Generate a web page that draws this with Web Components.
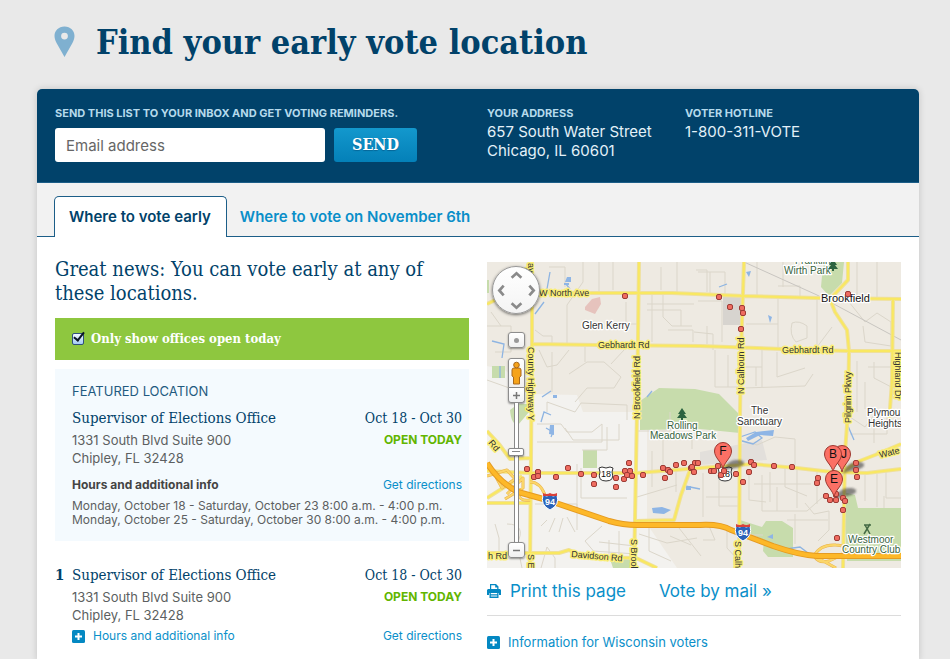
<!DOCTYPE html>
<html lang="en">
<head>
<meta charset="utf-8">
<title>Find your early vote location</title>
<style>
html{background:#e9e9e9;--navy:#01426a;--link:#0a8fc9;--slab:"DejaVu Serif Condensed","DejaVu Serif",serif}
body{margin:0;font-family:Inter,"Open Sans",sans-serif;font-size:13px;line-height:18px;color:#5c5f61;min-height:100vh;display:flex;flex-direction:column}
</style>
</head>
<body>
<page-title>Find your early vote location</page-title>
<vote-panel>
  <signup-bar slot="top"></signup-bar>
  <tab-bar slot="tabs"></tab-bar>
  <office-list slot="left"></office-list>
  <map-column slot="right"></map-column>
</vote-panel>

<script>
function define(name, html, setup) {
  const template = document.createElement('template');
  template.innerHTML = '<style>*{box-sizing:border-box}a{color:var(--link);text-decoration:none}h1,h2,h3,p{margin:0}</style>' + html;
  customElements.define(name, class extends HTMLElement {
    connectedCallback() {
      if (this.shadowRoot) return;
      const root = this.attachShadow({ mode: 'open' });
      root.append(template.content.cloneNode(true));
      if (setup) setup(root, this);
    }
  });
}

define('page-title', `
<style>
:host{display:flex;align-items:center;gap:21px;padding:20px 54px 25px}
svg{width:21px;height:32px;flex:none}
h1{font:bold 34px/44px var(--slab);color:var(--navy)}
</style>
<svg viewBox="0 0 21 32"><path fill="#7fb0d0" fill-rule="evenodd" d="M10.500 0.500C4.500 0.500 .5 4.800.5 10c0 2.500 1 4.800 2.200 7.200L10.500 31l7.800-13.800C19.500 14.800 20.500 12.500 20.500 10 20.500 4.800 16.500.5 10.500.5zm0 6.200a3.400 3.400 0 1 1 0 6.800 3.400 3.400 0 0 1 0-6.800z"/></svg>
<h1><slot></slot></h1>`);

define('vote-panel', `
<style>
:host{display:flex;flex-direction:column;flex:1;margin:0 31px 0 37px;background:#fff;border-radius:5px 5px 0 0;box-shadow:0 0 7px rgba(0,0,0,.16)}
main{display:grid;grid-template-columns:1fr 1fr;gap:18px;padding:20px 18px 8px}
</style>
<slot name="top"></slot><slot name="tabs"></slot>
<main><slot name="left"></slot><slot name="right"></slot></main>`);

define('signup-bar', `
<style>
:host{display:grid;grid-template-columns:1fr 1fr;gap:18px;background:var(--navy);color:#e3f1f9;padding:16px 18px 20px;border-bottom:1px solid #1c5e88;border-radius:5px 5px 0 0}
label,h2{display:block;font-size:11px;line-height:17px;font-weight:700;color:#b5daec}
form{margin:0}
.row{display:flex;gap:9px;margin-top:6px}
input{width:270px;min-width:0;height:34px;border:0;border-radius:3px;background:#fff;padding:0 11px;font:15px/20px Inter,sans-serif;color:#444}
input::placeholder{color:#666;opacity:1}
button{width:83px;height:34px;border:0;border-radius:3px;padding:0;background:linear-gradient(#1398cd,#0480b8);color:#fff;font:bold 16px/20px var(--slab);text-shadow:0 1px 1px rgba(0,50,90,.4)}
.facts{display:flex;gap:29px}
p{font-size:15px;line-height:19px}
.facts div{min-width:169px}
</style>
<form><label for="email">SEND THIS LIST TO YOUR INBOX AND GET VOTING REMINDERS.</label>
<div class="row"><input id="email" type="email" placeholder="Email address"><button type="button">SEND</button></div></form>
<div class="facts"><div><h2>YOUR ADDRESS</h2><p>657 South Water Street<br>Chicago, IL 60601</p></div><div><h2>VOTER HOTLINE</h2><p>1-800-311-VOTE</p></div></div>`);

define('tab-bar', `
<style>
:host{display:flex;padding:13px 17px 0;background:#f2f2f2;box-shadow:inset 0 -1px #1c5e88}
a{font-size:15px;line-height:42px;font-weight:600;height:41px;padding:0 14px 0 13px}
a.on{line-height:40px;color:var(--navy);background:#fff;border:1px solid #1c5e88;border-bottom:0;border-radius:5px 5px 0 0;padding:0 15px 0 14px}
</style>
<a class="on" href="#early">Where to vote early</a><a href="#november">Where to vote on November 6th</a>`);

define('plus-link', `
<style>
:host{display:block}
a{display:inline-flex;align-items:center;gap:8px}
svg{width:13px;height:13px;flex:none}
</style>
<a href="#more"><svg viewBox="0 0 13 13"><rect width="13" height="13" rx="1.500" fill="#0488c2"/><path d="M6.500 3v7M3 6.500h7" stroke="#fff" stroke-width="2"/></svg><span><slot></slot></span></a>`);

define('office-card', `
<style>
:host{display:grid;grid-template-columns:17px 1fr;padding-right:7px}
:host([featured]){background:#f4fafe;padding-top:13px;padding-bottom:14px}
b{font:bold 15px/25px var(--slab);color:var(--navy)}
.row{display:flex;justify-content:space-between;gap:12px}
.kind{display:none;font-size:13px;line-height:18px;color:#1f5a80;margin-bottom:6px}
:host([featured]) .kind{display:block}
h3,.date{font:15px/25px var(--slab);color:var(--navy)}
.date{font-size:14px}
.open{font-size:12px;font-weight:700;color:#62b500}
.info{margin-top:3px;font-size:12px}
:host([featured]) .info{margin-top:9px}
strong{color:#444}
.hours{font-size:12px;line-height:14px;margin-top:5px}
</style>
<b></b>
<div>
<p class="kind">FEATURED LOCATION</p>
<div class="row"><h3>Supervisor of Elections Office</h3><span class="date">Oct 18 - Oct 30</span></div>
<div class="row"><p>1331 South Blvd Suite 900<br>Chipley, FL 32428</p><span class="open">OPEN TODAY</span></div>
<div class="row info"><span class="label"></span><a href="#directions">Get directions</a></div>
</div>`, (root, host) => {
  root.querySelector('b').textContent = host.getAttribute('number') || '';
  const label = root.querySelector('.label');
  if (host.hasAttribute('featured')) {
    label.innerHTML = '<strong>Hours and additional info</strong>';
    const hours = document.createElement('p');
    hours.className = 'hours';
    hours.innerHTML = 'Monday, October 18 - Saturday, October 23 8:00 a.m. - 4:00 p.m.<br>Monday, October 25 - Saturday, October 30 8:00 a.m. - 4:00 p.m.';
    label.parentNode.after(hours);
  } else {
    label.innerHTML = '<plus-link>Hours and additional info</plus-link>';
  }
});

define('office-list', `
<style>
:host{display:block}
h2{font:20px/24px var(--slab);color:var(--navy)}
label{display:flex;align-items:center;gap:7px;margin:13px 0 9px;height:42px;padding:0 17px;background:#8ec73f;color:#fff;font:bold 13px/20px var(--slab)}
input{appearance:none;position:relative;width:12px;height:12px;margin:0;flex:none;border:1px solid #30507c;border-radius:2px;background:linear-gradient(#f2f8ff,#a4ccf4)}
input:checked::after{content:"";position:absolute;left:3px;top:-4px;width:4px;height:9px;border:solid #0b1524;border-width:0 2px 2px 0;transform:rotate(38deg)}
office-card + office-card{margin-top:22px}
</style>
<h2>Great news: You can vote early at any of these locations.</h2>
<label><input type="checkbox" checked>Only show offices open today</label>
<office-card featured></office-card>
<office-card number="1"></office-card>`);

define('map-column', `
<style>
:host{display:block;padding-top:5px}
nav{display:flex;gap:33px;margin-top:11px;padding-bottom:12px;border-bottom:1px solid #dcdcdc;font-size:17px;line-height:24px}
nav a{display:flex;align-items:center;gap:9px}
svg{width:14px;height:14px}
plus-link{margin-top:17px}
</style>
<voter-map></voter-map>
<nav><a href="#print"><svg viewBox="0 0 14 14" fill="#0488c2"><path d="M3 0h6l2.500 2.500V5H13l1 1v5h-2V9H2v2H0V6l1-1h2zM4.200 1.200V5h6V3.400H8.200V1.200z" fill-rule="evenodd"/><path fill-rule="evenodd" d="M2.500 8h9v6h-9zM3.800 9v1.200h6.400V9zm0 2.400v1.200h6.400v-1.200z"/></svg>Print this page</a><a href="#mail">Vote by mail »</a></nav>
<plus-link>Information for Wisconsin voters</plus-link>`);

define('voter-map', `
<style>
:host{display:block;position:relative;background:#eeeae2;font-family:"Liberation Sans",Arial,sans-serif}
.map{display:block;width:100%;height:auto}
.controls{position:absolute;left:5px;top:4px;width:48px;display:flex;flex-direction:column;align-items:center}
button{display:block;padding:0;border:1px solid #8d8d8d;background:linear-gradient(#fff,#f0f0f0);border-radius:3px;width:17px;height:16px;box-shadow:0 1px 2px rgba(0,0,0,.4);color:#777}
button svg{display:block;margin:auto}
.pan{display:grid;grid-template-columns:repeat(3,15px);grid-template-rows:repeat(3,15px);place-content:center;width:48px;height:48px;border-radius:50%;border:1px solid #999;background:linear-gradient(#fff,#f4f4f4);box-shadow:0 1px 3px rgba(0,0,0,.55)}
.pan button{width:15px;height:15px;border:0;background:none;box-shadow:none}
.center{margin-top:18px}
.peg{margin-top:10px;height:30px;border-radius:3px 3px 0 0}
.in{height:15px;border-top:0;border-radius:0 0 3px 3px}
input{appearance:none;writing-mode:vertical-lr;width:17px;height:139px;margin:0;background:linear-gradient(90deg,transparent 6px,#888 6px,#888 7px,#fff 7px,#fff 10px,#888 10px,#888 11px,transparent 11px)}
input::-webkit-slider-thumb{appearance:none;width:16px;height:8px;border:1px solid #888;border-radius:2px;background:linear-gradient(#888,#888) center/8px 1px no-repeat,#fff;box-shadow:0 1px 2px rgba(0,0,0,.4)}
</style>
<svg class="map" viewBox="0 0 414 306" role="img" aria-label="Map of early vote locations">
<defs>
<g id="pin"><path d="M0 0C-1-7-8.500-11-8.500-18a8.500 8.500 0 0 1 17 0C8.500-11 1-7 0 0z" fill="#fb7065" stroke="#9c3830"/></g>
<g id="shadow"><path d="M0 0C1-6 6-12 14-12C20-12 23-10 20-7C15-3 6-4 0 0z" fill="#333" opacity=".55" filter="url(#soft)"/></g>
<filter id="soft"><feGaussianBlur stdDeviation="1"/></filter>
<g id="i94"><path d="M-7-6Q-3-4 0-6Q3-4 7-6Q10 4 0 9Q-10 4-7-6z" fill="#2b62b8" stroke="#fff"/><path d="M-7-8Q-3-6 0-8Q3-6 7-8V-5H-7z" fill="#d8413b"/><text y="4" text-anchor="middle" font-size="9" font-weight="bold" fill="#fff">94</text></g>
<g id="tree"><path d="M0-6L4 0H2L5 4H1V6H-1V4H-5L-2 0H-4z" fill="#2c6340"/></g>
</defs>
<rect width="414" height="306" fill="#eeeae2"/>
<path d="M0 104L18 108 44 132 90 133 96 150H160V262L190 306H0z" fill="#f3f2ef"/>
<path d="M213 190L275 178 280 198 213 203z" fill="#e2dfdb"/><rect x="236" y="35" width="19" height="28" fill="#d7d4cf"/>
<g fill="#c7dcac">
<path d="M153 158V139L172 126 208 127 232 132 253 153V171L213 167 153 168zM337 0H357L355 21 342 34 334 25 335 14zM356 230L368 233 371 246H414V299H360zM96 188H110V206H96zM253 258L275 265 279 259H295L306 266V295H281L276 289 277 278 253 267zM5 104H18V116H5zM23 148Q24 162 31 163L42 150 40 142H31zM124 300L142 296 146 306H126zM0 18H2V31H0z"/>
</g>
<path d="M98 45L105 37 113 35 114 42 108 52 98 48z" fill="#e6c3bd"/>
<g fill="none" stroke="#dbd6ca" stroke-width="1">
<path d="M96 0V20L80 43V82M112 0V30H95M126 0V28M52 88L60 105 70 103 82 88M65 90V130M82 112L100 100H117L134 115 127 126H100L88 140M98 85V100M137 88L124 102M160 42H207M160 48H194V64M165 33V80M176 33V55L185 64H205M181 68H206V80M174 5V28M190 0V31M209 8H220V30M207 70L226 72V88M0 64H24V90H8M4 50L14 64M0 118L28 128M48 68L56 74H65V82M62 5H78V25M128 62H150M139 40V60"/>
<path d="M228 88V125H253M241 93V125M257 126L318 124 326 112M275 87V125M290 90V115L318 106M291 37V86M259 62H291M305 61Q302 73 309 80L320 76V64Q312 58 305 61M330 37V85L345 65M291 24H313V37M296 0V25M270 0V33M370 0V35M390 0V38M362 40L378 60 390 51 404 60V84L378 80 376 64M370 99V150M381 105H410M378 120V147M387 100V116L410 128M211 10H238V33M223 10V33M211 39H235V80M220 64V82M257 105H275M269 105V124"/>
<path d="M50 162H74L80 170H105L115 162V180H50M60 150V140L88 150 94 141 140 143V158M78 166L86 178H132V162M90 202V250M94 206V236H140M48 242H90V268M54 264L60 258M62 270L68 256M72 270L76 256M20 262Q40 262 30 282L35 306M8 262L12 276V298M54 306L60 285 68 296V306M80 255L88 270M115 264L98 279 115 299M112 280L148 284M106 289L149 292M122 278V296M132 269V293M152 272L180 281 210 276M162 266V289L184 299M183 274L204 283M192 266L214 294M150 169H183V150M163 176H205V187M176 178V206M150 235L190 223M165 189V225M189 207V230M120 165V188H95"/>
<path d="M253 178L270 183 288 175 308 177V203M275 213V249H320L338 233M283 210V240M298 204V225L320 234M310 208V246M330 209V242M267 222H324M290 225V249M262 213V238L279 240M216 211V255M232 214V244H252M219 235H252M222 264L228 278H216M240 267V286L252 299M255 273H276M308 252V282M318 241L327 252 342 249V268L331 279M300 258H341M363 155L378 165 387 153V181M363 172H400V153M390 212V245M378 212V239M399 207V236H414M397 234V246"/>
</g>
<path d="M257 0L330 33 414 78" fill="none" stroke="#c8c5c0"/>
<g fill="none" stroke="#8db4e2" stroke-width="1.300"><path d="M63 10L60 27 70 31M57 40L48 52M5 79L17 82 15 96M13 104V116M79 22L83 27M160 135L165 129M54 160L57 150 64 153M59 166L66 170 64 175M253 175L268 170 275 176 266 182 255 179M198 224L213 227M292 288L313 285 325 294M357 150L361 164 367 178M55 135L64 129M232 25L240 22"/></g>
<g fill="#8eb5e5"><path d="M63 163H67V173L62 172zM259 10L264 9 262 15zM165 246L175 245 184 248 177 252 166 251zM80 15H84V20H78zM77 21H82V23H77zM259 176L269 170 287 168 286 174 273 173 261 179zM199 224H204V228H199zM281 53L285 55 283 61zM280 275L286 272V277zM66 133H70V136H66z"/></g>
<g fill="none" stroke-linejoin="round">
<g stroke="#efe09a" stroke-width="4"><path d="M0 42L25 30 95 31 185 31 257 34 330 36 414 37M45 0V82L43 306M45 82L110 83 213 84 295 87 362 89 414 89M152 0L150 150 148 258 147 306M257 0L254 90 253 153 252 306M361 0V18L343 37 348 50 360 68 362 89 361 150 358 190 356 306M406 37L405 120 402 160M0 209L43 211 150 211 200 207 265 202 310 206 345 210 380 211 414 207M356 210L370 200 388 193 414 182M0 169L12 182 23 197 43 196M0 236L35 214M0 241H43M0 291H72L82 288 96 295 149 296 170 306M148 259L187 258 194 233 203 208"/></g>
<path stroke="#f9e860" stroke-width="2" d="M0 42L25 30 95 31 185 31 257 34 330 36 414 37M45 0V82L43 306M45 82L110 83 213 84 295 87 362 89 414 89M152 0L150 150 148 258 147 306M257 0L254 90 253 153 252 306M361 0V18L343 37 348 50 360 68 362 89 361 150 358 190 356 306M406 37L405 120 402 160M0 209L43 211 150 211 200 207 265 202 310 206 345 210 380 211 414 207M356 210L370 200 388 193 414 182M0 169L12 182 23 197 43 196M0 236L35 214M0 241H43M0 291H72L82 288 96 295 149 296 170 306M148 259L187 258 194 233 203 208"/>
<path stroke="#e8b04a" stroke-width="3" d="M0 214L20 208 28 217 15 226 9 215M20 232L36 216 36 226 18 237M43 220Q53 220 58 233M43 238Q30 240 32 228M327 294Q333 282 349 283Q360 283 357 292L342 299Q332 302 327 294L349 306"/>
<path stroke="#fbd66a" stroke-width="2" d="M0 214L20 208 28 217 15 226 9 215M20 232L36 216 36 226 18 237M43 220Q53 220 58 233M43 238Q30 240 32 228M327 294Q333 282 349 283Q360 283 357 292L342 299Q332 302 327 294L349 306"/>
<path stroke="#e59b22" stroke-width="6" d="M0 201Q12 220 31 230L60 238 122 259Q136 263 150 263H213Q234 262 244 268L286 284Q312 293 330 294H414"/>
<path stroke="#fdb829" stroke-width="4" d="M0 201Q12 220 31 230L60 238 122 259Q136 263 150 263H213Q234 262 244 268L286 284Q312 293 330 294H414"/>
</g>
<g font-size="9" fill="#333" stroke="#faee78" stroke-width="3" stroke-linejoin="round" paint-order="stroke">
<text x="52" y="34">W North Ave</text><text x="111" y="86">Gebhardt Rd</text><text x="295" y="91">Gebhardt Rd</text>
<text transform="translate(41 85) rotate(90)">County Highway Y</text><text transform="translate(41 1) rotate(90)">ay</text>
<text transform="translate(153 157) rotate(-90)">N Brookfield Rd</text><text transform="translate(257 132) rotate(-90)">N Calhoun Rd</text>
<text transform="translate(364 161) rotate(-90)">Pilgrim Pkwy</text><text transform="translate(408 90) rotate(90)">Highland Dr</text>
<text transform="translate(1 181) rotate(50)">Rd</text><text x="1" y="297">h Rd</text><text transform="translate(84 295) rotate(5)">Davidson Rd</text>
<text transform="translate(144 277) rotate(90)">S Brook</text><text transform="translate(248 279) rotate(90)">S Calh</text><text transform="translate(41 292) rotate(90)">S E</text>
<text transform="translate(393 196) rotate(-14)">Wate</text>
</g>
<g font-size="10" fill="#333" stroke="#fff" stroke-width="2.500" stroke-linejoin="round" paint-order="stroke">
<text x="95" y="67">Glen Kerry</text><text x="264" y="152">The</text><text x="250" y="163">Sanctuary</text><text x="380" y="154">Plymou</text><text x="381" y="165">Heights</text>
<text x="334" y="40" font-size="11" fill="#111">Brookfield</text>
<g fill="#37633d"><text x="180" y="167">Rolling</text><text x="163" y="177">Meadows Park</text><text x="308" y="2">Franklin</text><text x="297" y="12">Wirth Park</text><text x="361" y="281">Westmoor</text><text x="355" y="291">Country Club</text></g>
</g>
<use href="#tree" x="195" y="152"/><use href="#tree" x="346" y="3"/><path d="M378 263L383 272M383 262L377 272M377 263H384" stroke="#456b45" stroke-width="1.500"/>
<g id="us"><path d="M112 206L115 205 119 206 123 205 126 206 125 210Q128 219 119 219Q110 219 113 210z" fill="#fff" stroke="#333"/><text x="119" y="215" text-anchor="middle" font-size="9" fill="#111">18</text></g>
<use href="#us" x="119"/>
<use href="#i94" x="63" y="239"/><use href="#i94" x="256" y="270"/>
<use href="#shadow" x="236" y="210"/><use href="#shadow" x="356" y="212"/><use href="#shadow" x="348" y="238"/>
<g class="dots" fill="#ef6c60" stroke="#9c3b35"></g>
<use href="#pin" x="236" y="207"/><use href="#pin" x="355" y="210"/><use href="#pin" x="346" y="210"/><use href="#pin" x="347" y="235"/>
<g font-size="12" fill="#111" text-anchor="middle"><text x="236" y="193">F</text><text x="357" y="196">J</text><text x="346" y="196">B</text><text x="347" y="221">E</text></g>
</svg>
<div class="controls">
<div class="pan"></div>
<button class="center" aria-label="Center map"><svg width="7" height="7"><circle cx="3.500" cy="3.500" r="2.500" fill="#999"/></svg></button>
<button class="peg" aria-label="Street view"><svg width="13" height="24" viewBox="0 0 13 24" fill="#f6a31a" stroke="#a9691c"><path d="M2 9Q2 7 4 7H9Q11 7 11 9V15L9.500 16V23H3.500V16L2 15z"/><circle cx="6.500" cy="4" r="2.800"/></svg></button>
<button class="in" aria-label="Zoom in"><svg width="9" height="9"><path d="M4.500 1v7M1 4.500h7" stroke="#777" stroke-width="1.500"/></svg></button>
<input type="range" aria-label="Zoom level" min="0" max="100" value="34">
<button aria-label="Zoom out"><svg width="9" height="9"><path d="M1 4.500h7" stroke="#777" stroke-width="1.500"/></svg></button>
</div>`, root => {
  const pan = root.querySelector('.pan');
  [['up', 2, 1, 0], ['left', 1, 2, -90], ['right', 3, 2, 90], ['down', 2, 3, 180]].forEach(([name, col, row, turn]) => {
    pan.insertAdjacentHTML('beforeend', `<button aria-label="Pan ${name}" style="grid-area:${row}/${col}"><svg width="13" height="13" viewBox="0 0 12 12"><path transform="rotate(${turn} 6 6)" d="M1.500 8L6 4L10.500 8" fill="none" stroke="#8a8a8a" stroke-width="2.500"/></svg></button>`);
  });
  const dots = '40,207 51,210 47,215 51,214 69,215 81,206 94,212 107,213 107,222 129,216 129,225 137,217 138,209 143,209 140,213 145,214 142,201 156,213 176,206 181,208 183,210 178,216 189,203 197,201 204,206 208,201 211,201 207,210 205,205 224,209 227,209 231,204 234,213 237,209 249,212 256,220 262,210 264,200 267,203 287,204 305,205 331,216 330,221 339,234 343,238 349,238 356,236 358,239 356,248 350,276 349,232 369,201 369,208 370,215 138,34 232,35 243,45 255,46 256,51 254,67 361,32';
  root.querySelector('.dots').innerHTML = dots.split(' ').map(p => {
    const [x, y] = p.split(',');
    return `<rect x="${x - 2.5}" y="${y - 2.5}" width="5" height="5" rx="1.500"/>`;
  }).join('');
});
</script>
</body>
</html>
